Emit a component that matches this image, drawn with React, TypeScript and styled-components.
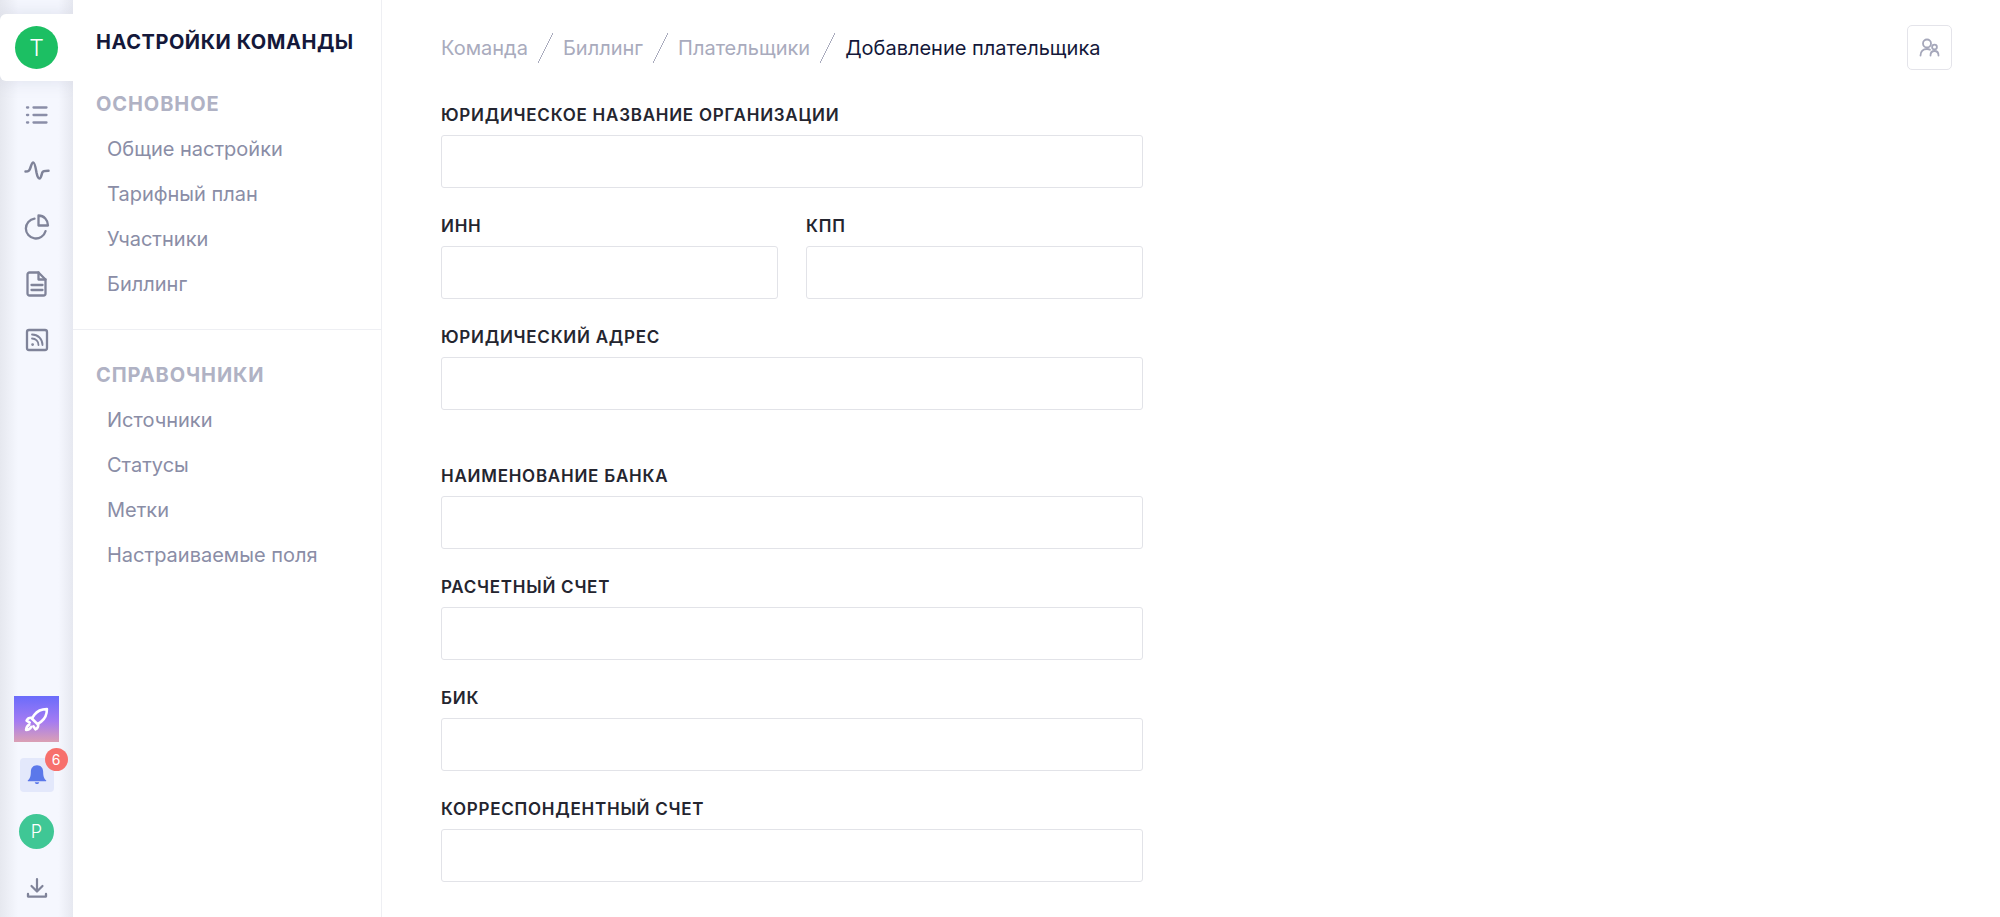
import React from "react";
import styled, {createGlobalStyle} from "styled-components";

const GlobalStyle = createGlobalStyle`
  html, body {
    margin: 0;
    padding: 0;
    background: #fff;
    font-family: Inter, "Noto Sans", sans-serif;
  }
  * {
    box-sizing: border-box;
  }
`

const mainMenu = ["Общие настройки", "Тарифный план", "Участники", "Биллинг"]
const refMenu = ["Источники", "Статусы", "Метки", "Настраиваемые поля"]

const ListIcon = () => (
    <svg width="24" height="24" viewBox="0 0 24 24" fill="none" stroke="#8a8ea8" strokeWidth="2.3" strokeLinecap="round">
        <path d="M8.500 4.500h13M8.500 12h13M8.500 19.500h13"/>
        <path d="M2 4.500h1.200M2 12h1.200M2 19.500h1.200"/>
    </svg>
)
const PulseIcon = () => (
    <svg width="26" height="24" viewBox="0 0 26 24" fill="none" stroke="#7f8399" strokeWidth="2.500" strokeLinecap="round" strokeLinejoin="round">
        <path d="M1.500 12.500c3.500 0 4-1 5-4 .8-2.500 1.500-5 2.800-5 1.500 0 2.500 6 3.200 10 .6 3 1.500 6 3 6 1.600 0 2-4 2.800-6 .7-1.500 2.500-1.700 6.200-1.700"/>
    </svg>
)
const PieIcon = () => (
    <svg width="26" height="26" viewBox="0 0 26 26" fill="none" stroke="#7f8399" strokeWidth="2.300" strokeLinejoin="round" strokeLinecap="round">
        <path d="M10.500 4.600a10 10 0 1 0 11 12.600"/>
        <path d="M14.500 1.500v10h9.500c0-5.500-4-10-9.500-10z"/>
    </svg>
)
const FileIcon = () => (
    <svg width="22" height="26" viewBox="0 0 22 26" fill="none" stroke="#7f8399" strokeWidth="2.300" strokeLinejoin="round" strokeLinecap="round">
        <path d="M3.500 1.500h9l7 7v14a2 2 0 0 1-2 2h-14a2 2 0 0 1-2-2v-19a2 2 0 0 1 2-2z"/>
        <path d="M12.500 1.500v7h7M5.500 14h11M5.500 19h11"/>
    </svg>
)
const RssIcon = () => (
    <svg width="24" height="24" viewBox="0 0 24 24" fill="none" stroke="#7f8399" strokeWidth="2.300" strokeLinecap="round" strokeLinejoin="round">
        <rect x="2" y="2" width="20" height="20" rx="2"/>
        <path d="M7 10.500c3.800 0 6.500 2.800 6.500 6.500M7 6.500c6 0 10.500 4.500 10.500 10.500" strokeWidth="1.800"/>
        <circle cx="7.600" cy="16.600" r="0.600" strokeWidth="1.600"/>
    </svg>
)
const RocketIcon = () => (
    <svg width="25" height="25" viewBox="0 0 24 24" fill="none" stroke="#fff" strokeWidth="2.500" strokeLinecap="round" strokeLinejoin="round">
        <path d="M22 2c-5 0-9.500 2-12 5.500L7.500 11l5.500 5.500 3.500-2.500C20 11.500 22 7 22 2z"/>
        <path d="M8 10.500c-2.200-.4-4.500.5-5.500 2.500l3 2M13.500 16c.4 2.200-.5 4.500-2.500 5.500l-2-3"/>
        <path d="M5 17c-1.800 1-2.800 2.800-3 5 2.200-.2 4-1.200 5-3"/>
    </svg>
)
const BellIcon = () => (
    <svg width="22" height="22" viewBox="0 0 20 20" fill="#5b78ea">
        <path d="M10 1.200c-3.600 0-5.600 2.600-5.600 6 0 4.200-1 6-2.600 7.600-.4.400-.2.900.3.900h15.800c.5 0 .7-.5.3-.9-1.600-1.600-2.600-3.400-2.600-7.600 0-3.400-2-6-5.600-6z"/>
        <path d="M8 16.500h4c0 1-.9 1.700-2 1.700s-2-.7-2-1.700z"/>
    </svg>
)
const DownloadIcon = () => (
    <svg width="22" height="22" viewBox="0 0 22 22" fill="none" stroke="#7f8399" strokeWidth="2.200" strokeLinecap="round" strokeLinejoin="round">
        <path d="M11 2v12M5.500 9l5.500 5.500 5.500-5.500"/>
        <path d="M2 17v2.600h18V17" strokeWidth="2.300"/>
    </svg>
)
const UsersIcon = () => (
    <svg width="22" height="22" viewBox="0 0 22 22" fill="none" stroke="#a5a7ba" strokeWidth="1.800" strokeLinecap="round">
        <circle cx="8" cy="6.500" r="4"/>
        <path d="M1.500 18.500c0-4 2.600-6.500 6.500-6.500 1.200 0 2.200.2 3 .7"/>
        <circle cx="15.500" cy="10" r="2.400"/>
        <path d="M11.500 18.500c0-2.600 1.500-4.500 4-4.500s4 1.900 4 4.500"/>
    </svg>
)

const Field = ({label}: {label: string}) => (
    <FieldWrap>
        <FieldLabel>{label}</FieldLabel>
        <FieldInput/>
    </FieldWrap>
)

export default function App() {
    return (
        <Page>
            <GlobalStyle/>
            <Rail>
                <TeamTab>
                    <TeamAvatar>T</TeamAvatar>
                </TeamTab>
                <RailNav>
                    <RailItem><ListIcon/></RailItem>
                    <RailItem><PulseIcon/></RailItem>
                    <RailItem><PieIcon/></RailItem>
                    <RailItem><FileIcon/></RailItem>
                    <RailItem><RssIcon/></RailItem>
                </RailNav>
                <RailBottom>
                    <RocketBox><RocketIcon/></RocketBox>
                    <BellBox>
                        <BellIcon/>
                        <Badge>6</Badge>
                    </BellBox>
                    <UserAvatar>P</UserAvatar>
                    <RailItem><DownloadIcon/></RailItem>
                </RailBottom>
            </Rail>
            <SidePanel>
                <PanelTitle>Настройки команды</PanelTitle>
                <MenuGroup>
                    <GroupTitle>Основное</GroupTitle>
                    {mainMenu.map(item => <MenuItem key={item}>{item}</MenuItem>)}
                </MenuGroup>
                <MenuDivider/>
                <MenuGroup>
                    <GroupTitle>Справочники</GroupTitle>
                    {refMenu.map(item => <MenuItem key={item}>{item}</MenuItem>)}
                </MenuGroup>
            </SidePanel>
            <Main>
                <TopBar>
                    <Crumbs>
                        <Crumb>Команда</Crumb>
                        <Slash/>
                        <Crumb>Биллинг</Crumb>
                        <Slash/>
                        <Crumb>Плательщики</Crumb>
                        <Slash/>
                        <Crumb $active>Добавление плательщика</Crumb>
                    </Crumbs>
                    <SquareButton><UsersIcon/></SquareButton>
                </TopBar>
                <Form>
                    <FieldGroup>
                        <Field label="Юридическое название организации"/>
                        <FieldRow>
                            <Field label="ИНН"/>
                            <Field label="КПП"/>
                        </FieldRow>
                        <Field label="Юридический адрес"/>
                    </FieldGroup>
                    <FieldGroup>
                        <Field label="Наименование банка"/>
                        <Field label="Расчетный счет"/>
                        <Field label="БИК"/>
                        <Field label="Корреспондентный счет"/>
                    </FieldGroup>
                </Form>
            </Main>
        </Page>
    )
}

const Page = styled.div`
  display: flex;
  height: 917px;
  overflow: hidden;
  background: #fff;
`
const Rail = styled.div`
  width: 73px;
  flex-shrink: 0;
  display: flex;
  flex-direction: column;
  padding-top: 14px;
  background: linear-gradient(90deg, #e6e8ef 0%, #f5f7fe 25%, #f5f7fe 80%, #e6e8f0 100%);
`
const TeamTab = styled.div`
  height: 67px;
  background: #fff;
  border-radius: 6px 0 0 6px;
  box-shadow: 0 0 18px rgba(120, 125, 160, 0.18);
  display: flex;
  align-items: center;
  padding-left: 15px;
`
const TeamAvatar = styled.div`
  width: 43px;
  height: 43px;
  border-radius: 50%;
  background: #1cbf63;
  color: #fff;
  font-size: 23px;
  font-weight: 300;
  display: flex;
  align-items: center;
  justify-content: center;
`
const RailNav = styled.div`
  display: flex;
  flex-direction: column;
  gap: 26.2px;
  padding-top: 19px;
`
const RailItem = styled.div`
  height: 30px;
  display: flex;
  align-items: center;
  justify-content: center;
`
const RailBottom = styled.div`
  margin-top: auto;
  display: flex;
  flex-direction: column;
  align-items: center;
  padding-bottom: 14px;
`
const RocketBox = styled.div`
  width: 45px;
  height: 46px;
  background: linear-gradient(180deg, #6a6cfb 0%, #a47bf2 55%, #dba0b4 100%);
  display: flex;
  align-items: center;
  justify-content: center;
`
const BellBox = styled.div`
  position: relative;
  width: 34px;
  height: 34px;
  margin-top: 16px;
  border-radius: 4px;
  background: #e3e8fb;
  display: flex;
  align-items: center;
  justify-content: center;
`
const Badge = styled.div`
  position: absolute;
  top: -10px;
  right: -14px;
  width: 23px;
  height: 23px;
  border-radius: 50%;
  background: #f7706c;
  color: #fff;
  font-size: 14px;
  display: flex;
  align-items: center;
  justify-content: center;
`
const UserAvatar = styled.div`
  width: 35px;
  height: 35px;
  margin: 22px 0 24px;
  border-radius: 50%;
  background: #3fc795;
  color: #fff;
  font-size: 18px;
  font-weight: 300;
  display: flex;
  align-items: center;
  justify-content: center;
`
const SidePanel = styled.div`
  position: relative;
  width: 309px;
  flex-shrink: 0;
  background: #fff;
  border-right: 1px solid #eeeff3;
  padding-top: 28px;
`
const PanelTitle = styled.div`
  padding-left: 23px;
  font-size: 20px;
  line-height: 28px;
  font-weight: 700;
  letter-spacing: 0.55px;
  text-transform: uppercase;
  color: #14183a;
  margin-bottom: 35px;
`
const MenuGroup = styled.div`
  padding-left: 23px;
`
const GroupTitle = styled.div`
  font-size: 20px;
  line-height: 26px;
  font-weight: 700;
  letter-spacing: 0.9px;
  text-transform: uppercase;
  color: #b0b2c4;
  margin-bottom: 10px;
`
const MenuItem = styled.div`
  height: 45px;
  padding-left: 11px;
  font-size: 20px;
  line-height: 45px;
  color: #8a8da6;
`
const MenuDivider = styled.div`
  height: 1px;
  background: #eeeff3;
  margin: 22px 0 32px;
`
const Main = styled.div`
  flex: 1;
  padding: 25px 48px 0 59px;
`
const TopBar = styled.div`
  display: flex;
  align-items: center;
  justify-content: space-between;
  height: 45px;
`
const Crumbs = styled.div`
  display: flex;
  align-items: center;
  gap: 10px;
`
const Crumb = styled.span<{$active?: boolean}>`
  font-size: 20px;
  color: ${props => props.$active ? "#14183a" : "#a9abbd"};
`
const Slash = styled.span`
  width: 15px;
  height: 30px;
  background: linear-gradient(to top left, transparent calc(50% - 0.6px), #a9abbd calc(50% - 0.6px), #a9abbd calc(50% + 0.6px), transparent calc(50% + 0.6px));
`
const SquareButton = styled.div`
  width: 45px;
  height: 45px;
  border: 1.5px solid #e4e4ea;
  border-radius: 5px;
  display: flex;
  align-items: center;
  justify-content: center;
`
const Form = styled.div`
  width: 702px;
  display: flex;
  flex-direction: column;
  gap: 56px;
  padding-top: 35px;
`
const FieldGroup = styled.div`
  display: flex;
  flex-direction: column;
  gap: 28px;
`
const FieldRow = styled.div`
  display: grid;
  grid-template-columns: 1fr 1fr;
  gap: 28px;
`
const FieldWrap = styled.div`
  display: flex;
  flex-direction: column;
  gap: 10px;
`
const FieldLabel = styled.label`
  font-size: 17px;
  line-height: 20px;
  height: 20px;
  font-weight: 600;
  letter-spacing: 0.75px;
  text-transform: uppercase;
  color: #24252f;
`
const FieldInput = styled.input`
  height: 53px;
  width: 100%;
  border: 1.5px solid #e2e3e8;
  border-radius: 3px;
  background: #fff;
  outline: none;
`
